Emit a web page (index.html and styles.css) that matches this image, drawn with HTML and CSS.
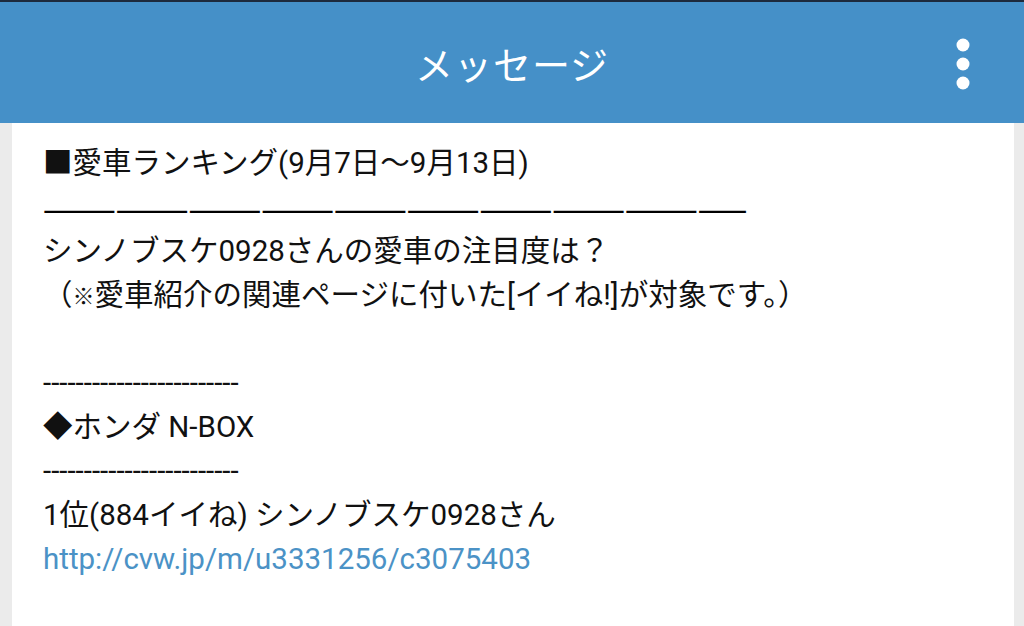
FILE: index.html
```html
<!DOCTYPE html>
<html lang="ja">
<head>
    <meta charset="utf-8">
    <title>メッセージ</title>
    <link rel="stylesheet" href="styles.css">
</head>
<body>

    <header class="app-bar">
        <h1 class="app-title">メッセージ</h1>
        <button class="menu-button" aria-label="メニュー">
            <svg width="14" height="52" viewBox="0 0 14 52">
                <circle cx="7" cy="7" r="6.5" fill="#fff"/>
                <circle cx="7" cy="26" r="6.5" fill="#fff"/>
                <circle cx="7" cy="45" r="6.5" fill="#fff"/>
            </svg>
        </button>
    </header>

    <main class="page">
        <div class="message">
            <div class="line">■愛車ランキング(9月7日～9月13日)</div>
            <div class="line rule">—————————————————————————————</div>
            <div class="line">シンノブスケ0928さんの愛車の注目度は？</div>
            <div class="line">（<span class="note-mark">※</span>愛車紹介の関連ページに付いた[イイね!]が対象です。）</div>
            <div class="line"></div>
            <div class="line">------------------------</div>
            <div class="line">◆ホンダ N-BOX</div>
            <div class="line">------------------------</div>
            <div class="line">1位(884イイね) シンノブスケ0928さん</div>
            <div class="line"><a class="link" href="#">http://cvw.jp/m/u3331256/c3075403</a></div>
        </div>
    </main>

</body>
</html>
```

FILE: styles.css
```css
body {
    margin: 0;
    font-family: Roboto, "Noto Sans CJK JP", sans-serif;
    background-color: #ebebeb;
    height: 626px;
    overflow: hidden;
}

.app-bar {
    height: 121px;
    background-color: #4590c8;
    border-top: 2px solid #1d2a3d;
    display: flex;
    align-items: center;
    justify-content: center;
    position: relative;
}
.app-title {
    margin: 0;
    color: white;
    font-weight: normal;
    font-size: 38px;
    letter-spacing: 1px;
}
.menu-button {
    position: absolute;
    right: 54px;
    top: 36px;
    padding: 0;
    border: none;
    background: none;
    line-height: 0;
}

.page {
    padding: 0 10px 0 12px;
}
.message {
    background-color: white;
    min-height: 503px;
    padding: 18px 31px 0;
    color: #111;
    font-size: 29.5px;
}
.line {
    height: 44px;
    line-height: 44px;
    white-space: nowrap;
}
.rule {
    font-family: "Noto Sans CJK JP", sans-serif;
    font-size: 29.4px;
    font-weight: 500;
    color: #000;
}
.note-mark {
    font-size: 22px;
    vertical-align: 1px;
}
.link {
    color: #4b92c6;
    text-decoration: none;
}
```
